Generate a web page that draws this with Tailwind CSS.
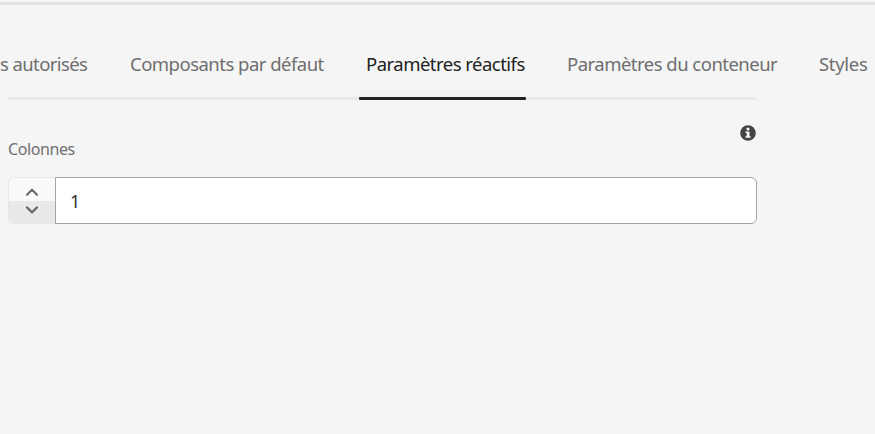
<!DOCTYPE html>
<html lang="fr">
<head>
<meta charset="utf-8">
<title>Paramètres réactifs</title>
<script src="https://cdn.jsdelivr.net/npm/@tailwindcss/browser@4"></script>
</head>
<body class="w-[875px] h-[434px] overflow-hidden bg-[#f5f5f5] pt-[2px] font-['Noto_Sans',sans-serif]">
<div class="h-[3px] bg-[#e1e1e1]"></div>
<nav class="flex h-[92px] pt-[46px] text-[18.5px] leading-[26px] tracking-[-0.52px] text-[#6e6e6e] whitespace-nowrap">
  <a class="w-[88px] shrink-0 tracking-[-0.6px]">s autorisés</a>
  <a class="ml-[42px] w-[195px] shrink-0">Composants par défaut</a>
  <a class="ml-[41px] w-[160px] shrink-0 text-[#222]">Paramètres réactifs</a>
  <a class="ml-[41px] w-[210px] shrink-0">Paramètres du conteneur</a>
  <a class="ml-[42px] shrink-0 tracking-[-0.3px]">Styles</a>
</nav>
<main class="ml-[8px] w-[749px]">
  <div class="h-[3px] bg-[#eaeaea] pl-[351px]"><div class="h-[3px] w-[167px] rounded-[1px] bg-[#222]"></div></div>
  <div class="flex h-[77px] justify-between pt-[25px]">
    <label for="columns" class="pt-[12px] text-[16px] leading-[24px] tracking-[-0.4px] text-[#707070]">Colonnes</label>
    <svg class="mr-[1px] h-4 w-4" viewBox="0 0 16 16"><circle cx="8" cy="8" r="7.8" fill="#444"/><circle cx="8" cy="4" r="1.6" fill="#f5f5f5"/><path d="M5.5 6.4h4v4.8h1.1v1.5H5.5v-1.5h1.2V7.9H5.5z" fill="#f5f5f5"/></svg>
  </div>
  <div class="flex h-[47px]">
    <div class="flex w-[47px] flex-col overflow-hidden rounded-l-[6px] border border-r-0 border-[#e6e6e6]">
      <button class="flex h-[23px] items-start justify-center bg-[#fafafa] pt-[10px]"><svg class="h-[8px] w-[14px]" viewBox="0 0 14 8" fill="none" stroke="#6b6b6b" stroke-width="2.2" stroke-linecap="round" stroke-linejoin="round"><path d="M2 6.7 7 1.7l5 5"/></svg></button>
      <button class="flex flex-1 items-start justify-center bg-[#e9e9e9] pt-[5px]"><svg class="h-[8px] w-[14px]" viewBox="0 0 14 8" fill="none" stroke="#6b6b6b" stroke-width="2.2" stroke-linecap="round" stroke-linejoin="round"><path d="m2 1.4 5 5 5-5"/></svg></button>
    </div>
    <input id="columns" value="1" class="h-[47px] min-w-0 flex-1 rounded-r-[6px] border border-[#a5a5a5] bg-white pl-[14px] text-[18px] leading-[26px] text-[#333] outline-none">
  </div>
</main>
</body>
</html>
